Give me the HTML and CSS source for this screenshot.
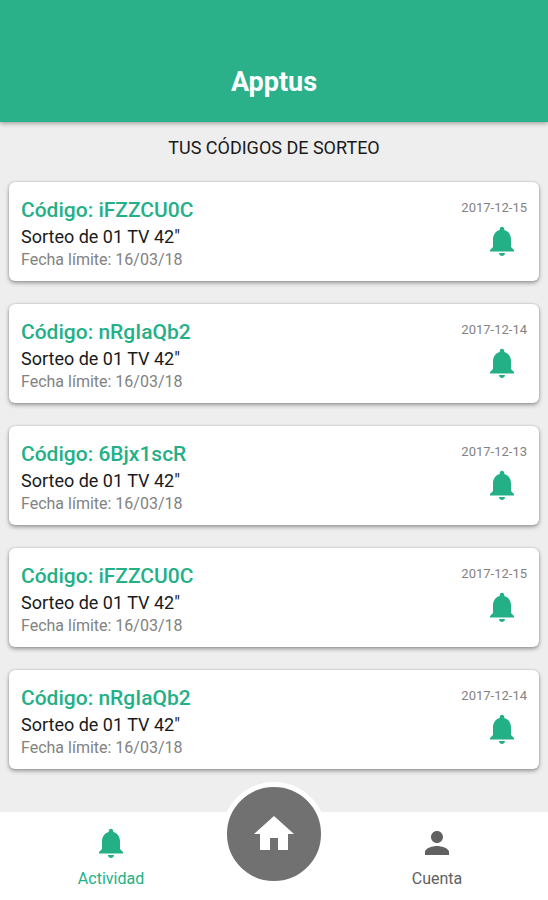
FILE: index.html
```html
<!DOCTYPE html>
<html lang="es">
<head>
    <meta charset="UTF-8">
    <meta name="viewport" content="width=device-width, initial-scale=1.0">
    <title>Apptus</title>
    <link rel="stylesheet" href="styles.css">
</head>
<body>
    <svg class="sprite" aria-hidden="true">
        <symbol id="icon-bell" viewBox="0 0 24 24">
            <path d="M12 22c1.1 0 2-.9 2-2h-4c0 1.1.89 2 2 2zm6-6v-5c0-3.07-1.64-5.64-4.5-6.32V4c0-.83-.67-1.5-1.5-1.5s-1.5.67-1.5 1.5v.68C7.63 5.36 6 7.92 6 11v5l-2 2v1h16v-1l-2-2z"/>
        </symbol>
        <symbol id="icon-home" viewBox="0 0 24 24">
            <path d="M10 20v-6h4v6h5v-8h3L12 3 2 12h3v8z"/>
        </symbol>
        <symbol id="icon-person" viewBox="0 0 24 24">
            <path d="M12 12c2.21 0 4-1.79 4-4s-1.79-4-4-4-4 1.79-4 4 1.79 4 4 4zm0 2c-2.67 0-8 1.34-8 4v2h16v-2c0-2.66-5.33-4-8-4z"/>
        </symbol>
    </svg>

    <header class="header">
        <h1>Apptus</h1>
    </header>

    <main class="content">
        <h2 class="section-title">TUS CÓDIGOS DE SORTEO</h2>

        <ul class="code-list">
            <li class="card">
                <div class="card-info">
                    <h3 class="code">Código: iFZZCU0C</h3>
                    <p class="prize">Sorteo de 01 TV 42"</p>
                    <p class="deadline">Fecha límite: 16/03/18</p>
                </div>
                <div class="card-side">
                    <time datetime="2017-12-15">2017-12-15</time>
                    <svg class="icon"><use href="#icon-bell"/></svg>
                </div>
            </li>
            <li class="card">
                <div class="card-info">
                    <h3 class="code">Código: nRgIaQb2</h3>
                    <p class="prize">Sorteo de 01 TV 42"</p>
                    <p class="deadline">Fecha límite: 16/03/18</p>
                </div>
                <div class="card-side">
                    <time datetime="2017-12-14">2017-12-14</time>
                    <svg class="icon"><use href="#icon-bell"/></svg>
                </div>
            </li>
            <li class="card">
                <div class="card-info">
                    <h3 class="code">Código: 6Bjx1scR</h3>
                    <p class="prize">Sorteo de 01 TV 42"</p>
                    <p class="deadline">Fecha límite: 16/03/18</p>
                </div>
                <div class="card-side">
                    <time datetime="2017-12-13">2017-12-13</time>
                    <svg class="icon"><use href="#icon-bell"/></svg>
                </div>
            </li>
            <li class="card">
                <div class="card-info">
                    <h3 class="code">Código: iFZZCU0C</h3>
                    <p class="prize">Sorteo de 01 TV 42"</p>
                    <p class="deadline">Fecha límite: 16/03/18</p>
                </div>
                <div class="card-side">
                    <time datetime="2017-12-15">2017-12-15</time>
                    <svg class="icon"><use href="#icon-bell"/></svg>
                </div>
            </li>
            <li class="card">
                <div class="card-info">
                    <h3 class="code">Código: nRgIaQb2</h3>
                    <p class="prize">Sorteo de 01 TV 42"</p>
                    <p class="deadline">Fecha límite: 16/03/18</p>
                </div>
                <div class="card-side">
                    <time datetime="2017-12-14">2017-12-14</time>
                    <svg class="icon"><use href="#icon-bell"/></svg>
                </div>
            </li>
        </ul>
    </main>

    <nav class="tab-bar">
        <a class="tab active" href="#actividad">
            <svg class="icon"><use href="#icon-bell"/></svg>
            <span>Actividad</span>
        </a>
        <a class="home-btn" href="#inicio" aria-label="Inicio">
            <svg class="icon-home"><use href="#icon-home"/></svg>
        </a>
        <a class="tab" href="#cuenta">
            <svg class="icon"><use href="#icon-person"/></svg>
            <span>Cuenta</span>
        </a>
    </nav>
</body>
</html>
```

FILE: styles.css
```css
* {
    margin: 0;
    padding: 0;
    box-sizing: border-box;
}

body {
    font-family: Roboto, "Liberation Sans", sans-serif;
    background: #eeeeee;
    color: #1a1a1a;
    min-height: 100vh;
    display: flex;
    flex-direction: column;
}

.sprite {
    display: none;
}

.header {
    background: #2bb189;
    color: white;
    padding: 66px 16px 24px;
    text-align: center;
    box-shadow: 0 1px 5px rgba(0, 0, 0, 0.4);
}

.header h1 {
    font-size: 27px;
    line-height: 32px;
    font-weight: 700;
}

.content {
    flex: 1;
    padding: 14px 9px 40px;
}

.section-title {
    font-size: 18px;
    line-height: 24px;
    font-weight: 400;
    text-align: center;
    margin-bottom: 22px;
}

.code-list {
    list-style: none;
    display: flex;
    flex-direction: column;
    gap: 23px;
}

.card {
    display: flex;
    justify-content: space-between;
    background: white;
    border-radius: 6px;
    padding: 15px 12px 12px;
    box-shadow: 0 2px 4px rgba(0, 0, 0, 0.36), 0 0 2px rgba(0, 0, 0, 0.2);
}

.code {
    font-size: 21px;
    line-height: 26px;
    font-weight: 500;
    color: #24b086;
}

.prize {
    font-size: 18px;
    line-height: 28px;
}

.deadline {
    font-size: 16px;
    line-height: 18px;
    color: #828282;
}

.card-side {
    display: flex;
    flex-direction: column;
    align-items: flex-end;
    color: #24b086;
}

.card-side time {
    font-size: 13px;
    line-height: 22px;
    color: #828282;
}

.card-side .icon {
    margin: 4px 7px 0 0;
}

.icon {
    width: 36px;
    height: 36px;
    fill: currentColor;
}

.tab-bar {
    display: flex;
    justify-content: center;
    background: white;
    height: 88px;
}

.tab {
    flex: 1;
    display: flex;
    flex-direction: column;
    align-items: center;
    padding-top: 13px;
    gap: 8px;
    font-size: 16px;
    line-height: 20px;
    color: #616161;
    text-decoration: none;
}

.tab.active {
    color: #24b086;
}

/* raised over the bar, the white border cuts into the list background */
.home-btn {
    display: flex;
    align-items: center;
    justify-content: center;
    width: 104px;
    height: 104px;
    margin-top: -30px;
    border: 5px solid white;
    border-radius: 50%;
    background: #717171;
    color: white;
}

.icon-home {
    width: 48px;
    height: 48px;
    fill: currentColor;
}
```
